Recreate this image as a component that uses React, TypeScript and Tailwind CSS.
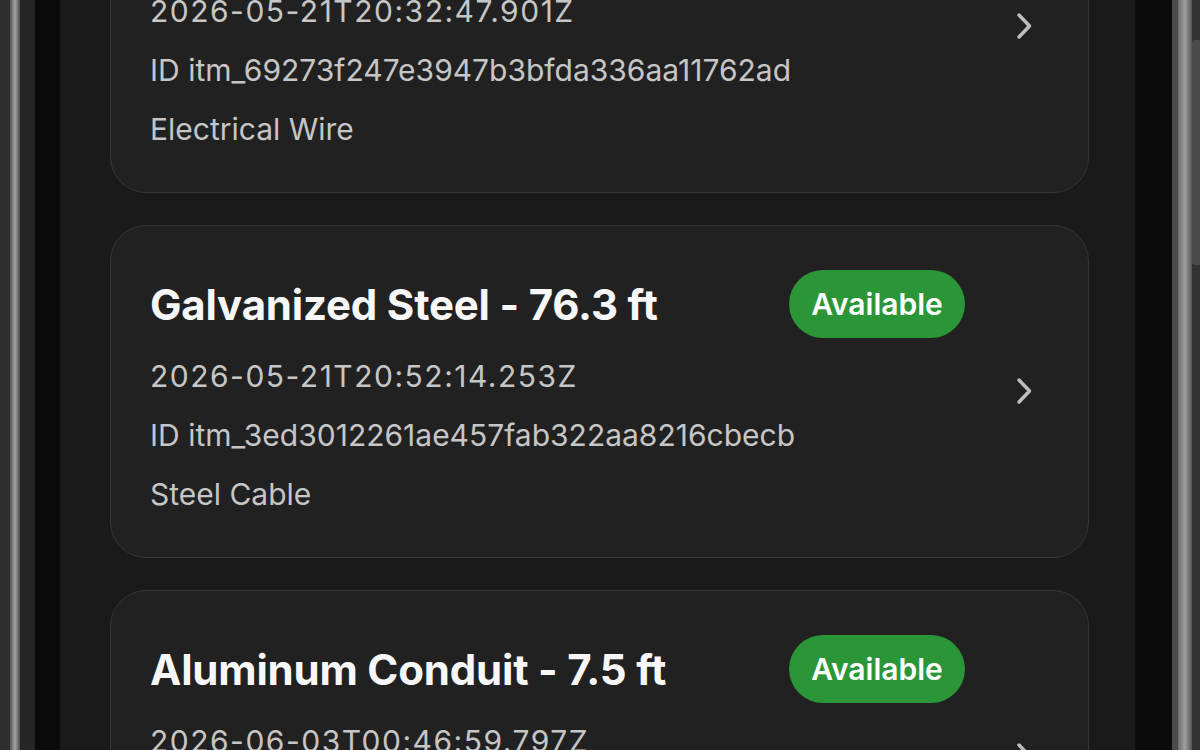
const items = [
  {
    title: "Copper Wire - 12.0 ft",
    date: "2026-05-21T20:32:47.901Z",
    id: "itm_69273f247e3947b3bfda336aa11762ad",
    category: "Electrical Wire",
  },
  {
    title: "Galvanized Steel - 76.3 ft",
    date: "2026-05-21T20:52:14.253Z",
    id: "itm_3ed3012261ae457fab322aa8216cbecb",
    category: "Steel Cable",
  },
  {
    title: "Aluminum Conduit - 7.5 ft",
    date: "2026-06-03T00:46:59.797Z",
    id: "itm_5a1c09e2b7f44d0e9a6c31d8e2f07b14",
    category: "Conduit",
  },
];

function Chevron() {
  return (
    <svg width="18" height="30" viewBox="0 0 18 30" fill="none" className="shrink-0">
      <path d="M4 4 L14.5 15 L4 26" stroke="#bdbdbd" strokeWidth="3.5" strokeLinecap="round" strokeLinejoin="round" />
    </svg>
  );
}

function ItemCard({ item }: { item: (typeof items)[number] }) {
  return (
    <div className="flex items-center rounded-[36px] border border-[#363636] bg-[#212121] pl-[39px] pr-[55px] pt-[44px] pb-[33px]">
      <div className="flex-1 min-w-0">
        <div className="flex items-center justify-between h-[68px]">
          <h2 className="text-[42px] font-bold text-[#f7f7f7] tracking-[-0.2px] whitespace-nowrap">{item.title}</h2>
          <span className="flex items-center justify-center w-[176px] h-[68px] rounded-full bg-[#2a9637] text-white text-[30px] font-semibold">
            Available
          </span>
        </div>
        <div className="mt-[9px] text-[30px] leading-[59px] text-[#c6c6c6]">
          <p className="tracking-[1.5px]">{item.date}</p>
          <p>ID {item.id}</p>
          <p>{item.category}</p>
        </div>
      </div>
      <div className="ml-[50px] mb-[12px]">
        <Chevron />
      </div>
    </div>
  );
}

export default function App() {
  return (
    <div className="w-[1200px] h-[750px] overflow-hidden flex bg-black font-['Inter',sans-serif]">
      {/* left frame */}
      <div className="w-[10px] bg-[#2e2e2e]" />
      <div className="w-[10px] bg-gradient-to-r from-[#555] via-[#a5a5a5] to-[#4a4a4a]" />
      <div className="w-[15px] bg-[#262626]" />
      <div className="w-[25px] bg-[#0b0b0b]" />

      <div className="flex-1 bg-[#1a1a1a] pl-[50px] pr-[46px]">
        <div className="-mt-[140px] flex flex-col gap-8">
          {items.map((item) => (
            <ItemCard key={item.id} item={item} />
          ))}
        </div>
      </div>

      {/* right frame */}
      <div className="w-[37px] bg-[#0b0b0b]" />
      <div className="w-[6px] bg-[#4a4a4a]" />
      <div className="w-[14px] bg-gradient-to-r from-[#6a6a6a] via-[#a0a0a0] to-[#555]" />
      <div className="w-[8px] flex flex-col bg-[#333]">
        <div className="mt-[40px] h-[225px] bg-[#4a4a4a] rounded-l-[3px]" />
      </div>
    </div>
  );
}
